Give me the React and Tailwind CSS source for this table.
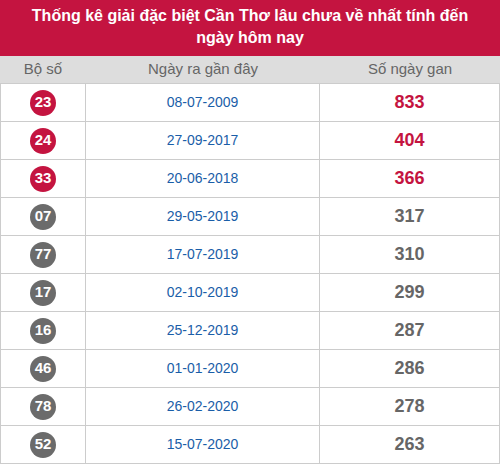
import React from "react";

const rows = [
  ["23", "08-07-2009", "833", true],
  ["24", "27-09-2017", "404", true],
  ["33", "20-06-2018", "366", true],
  ["07", "29-05-2019", "317", false],
  ["77", "17-07-2019", "310", false],
  ["17", "02-10-2019", "299", false],
  ["16", "25-12-2019", "287", false],
  ["46", "01-01-2020", "286", false],
  ["78", "26-02-2020", "278", false],
  ["52", "15-07-2020", "263", false],
];

export default function App() {
  return (
    <div className="w-[500px] bg-white font-['Liberation_Sans',Arial,sans-serif]">
      {/* Tiêu đề */}
      <div className="bg-[#c41440] text-white font-bold text-[16px] leading-[22px] text-center h-[56px] pt-[5px] px-[26px]">
        Thống kê giải đặc biệt Cần Thơ lâu chưa về nhất tính đến ngày hôm nay
      </div>

      {/* Hàng tiêu đề bảng */}
      <div className="grid grid-cols-[86px_234px_180px] h-[28px] bg-[#dddddd] border-b border-[#cccccc] text-[#666666] text-[15px]">
        <div className="flex items-center justify-center">Bộ số</div>
        <div className="flex items-center justify-center">Ngày ra gần đây</div>
        <div className="flex items-center justify-center">Số ngày gan</div>
      </div>

      {rows.map(([num, date, days, hot]) => (
        <div
          key={num}
          className="grid grid-cols-[86px_234px_180px] h-[38px] border-b border-[#cccccc]"
        >
          <div className="flex items-center justify-center border-l border-r border-[#cccccc]">
            <span
              className={
                "flex items-center justify-center w-[26px] h-[26px] rounded-full text-white font-bold text-[15px] " +
                (hot ? "bg-[#c41440]" : "bg-[#6b6b6b]")
              }
            >
              {num}
            </span>
          </div>
          <div className="flex items-center justify-center border-r border-[#cccccc] text-[#1a5ea8] text-[14px]">
            {date}
          </div>
          <div
            className={
              "flex items-center justify-center border-r border-[#cccccc] font-bold text-[18px] " +
              (hot ? "text-[#c41440]" : "text-[#666666]")
            }
          >
            {days}
          </div>
        </div>
      ))}
    </div>
  );
}
